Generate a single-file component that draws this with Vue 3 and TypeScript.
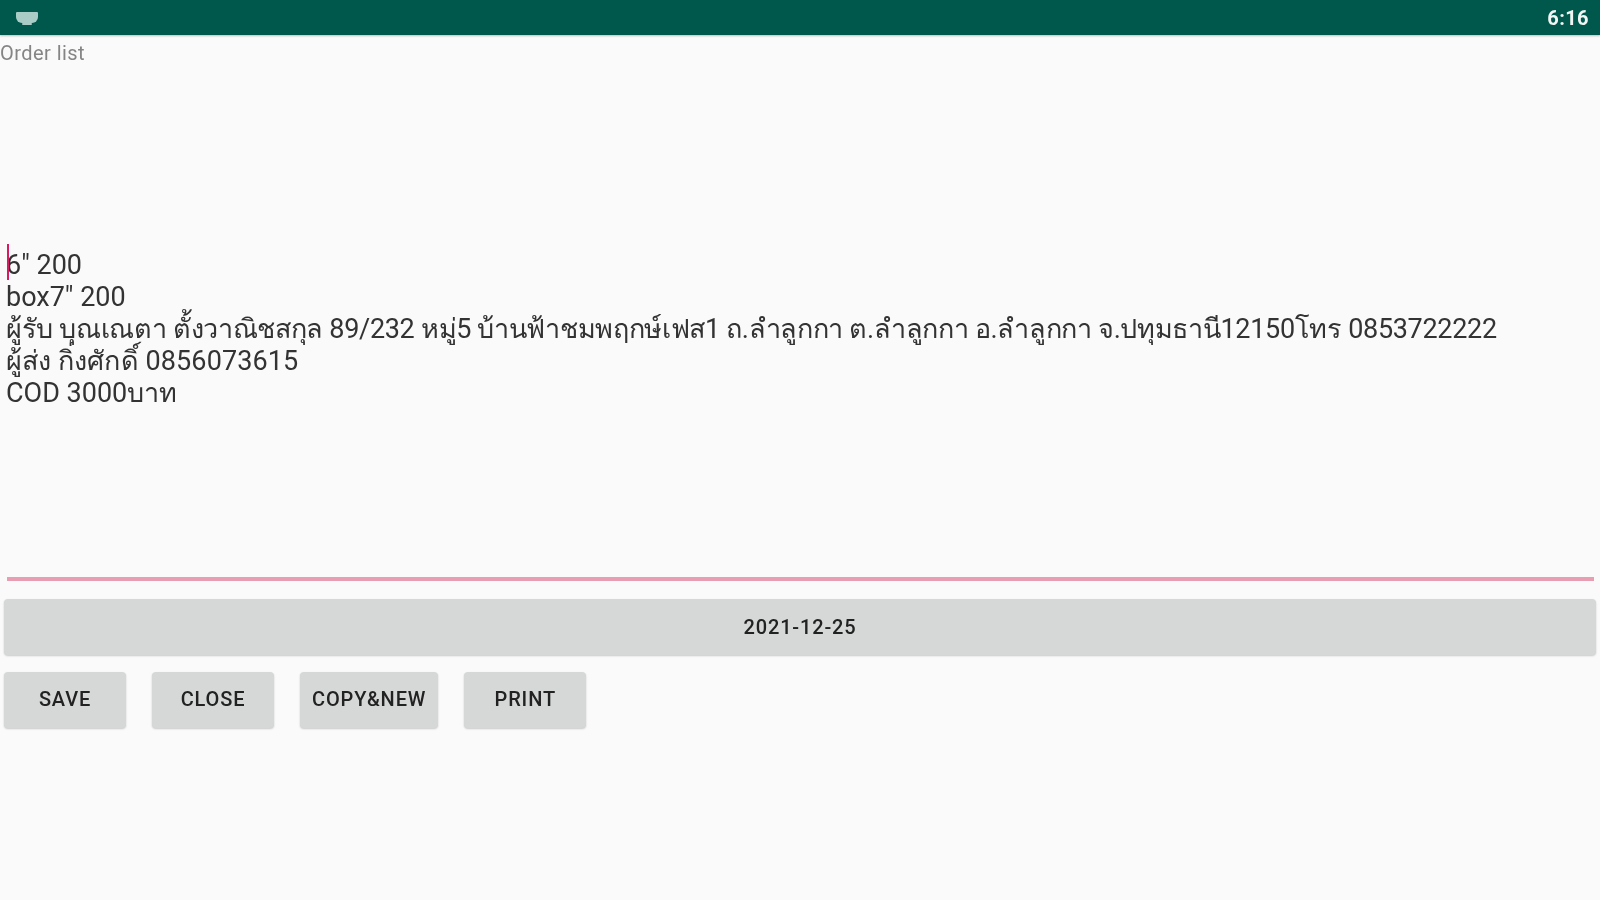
<script setup lang="ts">
const lines: string[] = [
  '6" 200',
  'box7" 200',
  "ผู้รับ บุณเณตา ตั้งวาณิชสกุล 89/232 หมู่5 บ้านฟ้าชมพฤกษ์เฟส1 ถ.ลำลูกกา ต.ลำลูกกา อ.ลำลูกกา จ.ปทุมธานี12150โทร 0853722222",
  "ผู้ส่ง กิ่งศักดิ์ 0856073615",
  "COD 3000บาท",
];

const actions: string[] = ["Save", "Close", "Copy&New", "Print"];
</script>

<template>
  <div class="screen">
    <div class="status-bar">
      <svg class="keyboard" viewBox="0 0 22 13" width="22" height="13">
        <path d="M1 0h20a1 1 0 0 1 1 1v4a6 6 0 0 1-6 6H6a6 6 0 0 1-6-6V1a1 1 0 0 1 1-1z" fill="#a9cdc6" />
        <rect x="6" y="11" width="10" height="2" rx="1" fill="#a9cdc6" />
      </svg>
      <span class="clock">6:16</span>
    </div>
    <div class="label">Order list</div>
    <div class="field">
      <div class="text">
        <span class="caret"></span>
        <div
          class="line"
          :class="{ address: index === 2, sender: index === 3 }"
          v-for="(line, index) in lines"
          :key="index"
        >{{ line }}</div>
      </div>
    </div>
    <div class="underline"></div>
    <button class="btn date">2021-12-25</button>
    <div class="actions">
      <button class="btn" v-for="action in actions" :key="action">{{ action }}</button>
    </div>
  </div>
</template>

<style>
html,
body {
  margin: 0;
  background: #fafafa;
}
</style>

<style scoped>
.screen {
  display: flex;
  flex-direction: column;
  width: 1600px;
  height: 900px;
  overflow: hidden;
  background: #fafafa;
  font-family: Roboto, "Noto Sans", "DejaVu Sans", sans-serif;
  filter: blur(0.7px);
}

.status-bar {
  display: flex;
  align-items: center;
  justify-content: space-between;
  flex: none;
  height: 35px;
  padding: 0 11px 0 16px;
  background: #00574b;
  box-shadow: 0 1px 2px rgba(0, 0, 0, 0.25);
}

.keyboard {
  margin-top: 2px;
}

.clock {
  color: #f1f5f4;
  font-size: 20px;
  font-weight: 700;
  letter-spacing: 0.4px;
}

.label {
  flex: none;
  height: 30px;
  padding-top: 6px;
  box-sizing: border-box;
  color: #858585;
  font-size: 20px;
  line-height: 24px;
  letter-spacing: 0.45px;
}

.field {
  display: flex;
  align-items: center;
  flex: none;
  height: 528px;
  padding: 0 6px;
}

.text {
  position: relative;
  color: #333;
  font-size: 27px;
  line-height: 32px;
  white-space: nowrap;
}

.address {
  letter-spacing: -0.32px;
}

.sender {
  letter-spacing: 0.11px;
}

.caret {
  position: absolute;
  left: 1px;
  top: -5px;
  width: 2px;
  height: 36px;
  background: #d81b60;
}

.underline {
  flex: none;
  height: 4px;
  margin: -16px 6px 0 7px;
  background: #e89db3;
}

.btn {
  box-sizing: border-box;
  height: 56px;
  padding: 0 12px 2px;
  min-width: 122px;
  border: none;
  border-radius: 4px;
  background: #d6d7d7;
  box-shadow: 0 1px 2px rgba(0, 0, 0, 0.2);
  color: #222;
  font-family: inherit;
  font-size: 20px;
  font-weight: 500;
  letter-spacing: 0.85px;
  text-transform: uppercase;
}

.date {
  flex: none;
  margin: 18px 4px 0;
  padding-bottom: 0;
}

.actions {
  display: flex;
  gap: 26px;
  margin: 17px 4px 0;
}
</style>
